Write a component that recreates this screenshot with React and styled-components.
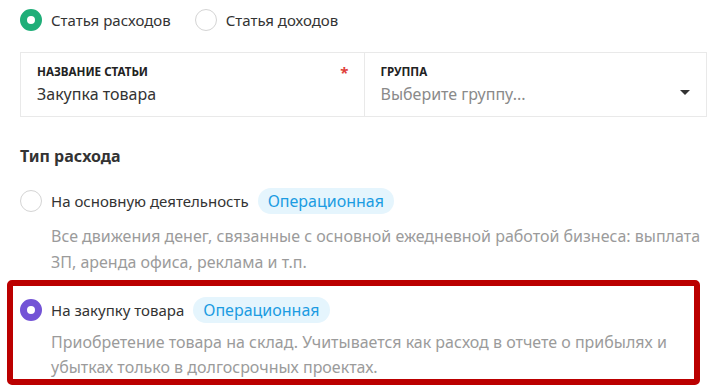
import React, {useState} from 'react'
import styled, {createGlobalStyle} from 'styled-components'

const GlobalStyle = createGlobalStyle`
  body {
    margin: 0;
    padding: 0;
    background: #fff;
    font-family: "Noto Sans", "Open Sans", sans-serif;
    color: #333;
  }
`

const Page = styled.div`
  width: 687px;
  padding: 9px 0 0 20px;
`

const KindRow = styled.div`
  display: flex;
  align-items: center;
  gap: 24px;
  height: 22px;
`

const RadioLabel = styled.label`
  display: flex;
  align-items: center;
  gap: 9px;
  font-size: 15px;
  color: #333;
  cursor: pointer;
`

const Radio = styled.span`
  box-sizing: border-box;
  width: 22px;
  height: 22px;
  flex: none;
  border-radius: 50%;
  background: #fff;
  border: ${p => (p.$checked ? `7px solid ${p.$color}` : '1px solid #d4d4d4')};
`

const Fields = styled.div`
  margin-top: 21px;
  display: grid;
  grid-template-columns: 1fr 1fr;
  border: 1px solid #e9e9e9;
  height: 65px;
  box-sizing: border-box;
`

const Field = styled.div`
  position: relative;
  padding: 11px 16px 0 16px;
  & + & {
    border-left: 1px solid #e9e9e9;
  }
`

const FieldLabel = styled.div`
  font-size: 11.6px;
  font-weight: 700;
  line-height: 16px;
  color: #222;
  text-transform: uppercase;
`

const FieldValue = styled.div`
  margin-top: 3px;
  font-size: 16px;
  line-height: 22px;
  color: ${p => (p.$placeholder ? '#8a8a8a' : '#333')};
`

const Required = styled.span`
  position: absolute;
  top: 9px;
  right: 15px;
  color: #e0403a;
  font-size: 15px;
  font-weight: 700;
`

const Caret = styled.span`
  position: absolute;
  right: 16px;
  top: 37px;
  width: 0;
  height: 0;
  border-left: 5px solid transparent;
  border-right: 5px solid transparent;
  border-top: 5px solid #333;
`

const SectionTitle = styled.div`
  margin-top: 28px;
  font-size: 16px;
  font-weight: 700;
  line-height: 22px;
  color: #333;
`

const Option = styled.div`
  margin-top: ${p => (p.$highlight ? '5px' : '21px')};
  ${p =>
    p.$highlight &&
    `
    margin-left: -13px;
    margin-right: 7px;
    border: 6px solid #bb0000;
    border-radius: 5px;
    padding: 11px 0 0 7px;
    height: 105px;
    box-sizing: border-box;
    overflow: hidden;
  `}
`

const OptionHead = styled.div`
  display: flex;
  align-items: center;
  height: 26px;
`

const OptionName = styled.span`
  margin-left: 9px;
  font-size: 15px;
  color: #333;
`

const Badge = styled.span`
  margin-left: 9px;
  height: 26px;
  padding: 0 10px;
  border-radius: 13px;
  background: #e5f5fd;
  color: #1c9ce2;
  font-size: 16px;
  line-height: 26px;
`

const Description = styled.div`
  margin-top: ${p => (p.$tight ? '7px' : '9px')};
  padding-left: 31px;
  font-size: 16px;
  line-height: ${p => (p.$tight ? '25px' : '26px')};
  color: #9b9b9b;
`

const options = [
  {
    id: 'main',
    name: 'На основную деятельность',
    badge: 'Операционная',
    text: 'Все движения денег, связанные с основной ежедневной работой бизнеса: выплата ЗП, аренда офиса, реклама и т.п.',
  },
  {
    id: 'goods',
    name: 'На закупку товара',
    badge: 'Операционная',
    text: 'Приобретение товара на склад. Учитывается как расход в отчете о прибылях и убытках только в долгосрочных проектах.',
  },
]

export default function App() {
  const [kind, setKind] = useState('expense')
  const [type, setType] = useState('goods')

  return (
    <Page>
      <GlobalStyle />
      <KindRow>
        <RadioLabel onClick={() => setKind('expense')}>
          <Radio $checked={kind === 'expense'} $color="#1fae78" />
          Статья расходов
        </RadioLabel>
        <RadioLabel onClick={() => setKind('income')}>
          <Radio $checked={kind === 'income'} $color="#1fae78" />
          Статья доходов
        </RadioLabel>
      </KindRow>

      <Fields>
        <Field>
          <FieldLabel>Название статьи</FieldLabel>
          <FieldValue>Закупка товара</FieldValue>
          <Required>*</Required>
        </Field>
        <Field>
          <FieldLabel>Группа</FieldLabel>
          <FieldValue $placeholder>Выберите группу...</FieldValue>
          <Caret />
        </Field>
      </Fields>

      <SectionTitle>Тип расхода</SectionTitle>

      {options.map(o => {
        const highlight = o.id === 'goods'
        return (
          <Option key={o.id} $highlight={highlight} onClick={() => setType(o.id)}>
            <OptionHead>
              <Radio $checked={type === o.id} $color="#7353d6" />
              <OptionName>{o.name}</OptionName>
              <Badge>{o.badge}</Badge>
            </OptionHead>
            <Description $tight={highlight}>{o.text}</Description>
          </Option>
        )
      })}
    </Page>
  )
}
